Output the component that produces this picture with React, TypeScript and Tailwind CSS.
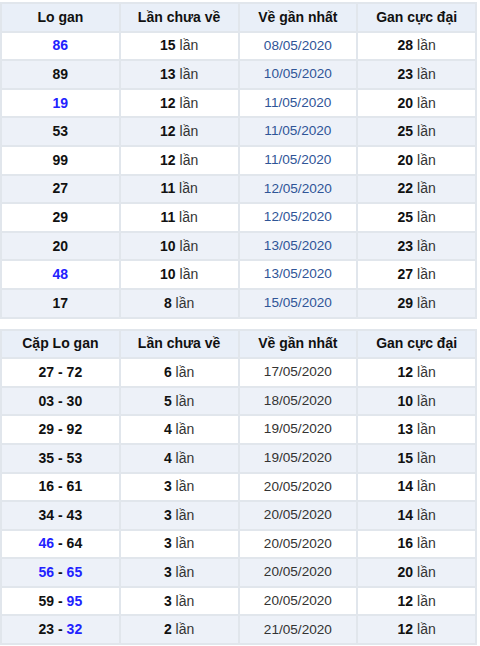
type Cell = { text: string; blue?: boolean };

const loGan = [
  { num: [{ text: "86", blue: true }], miss: "15", last: "08/05/2020", max: "28" },
  { num: [{ text: "89" }], miss: "13", last: "10/05/2020", max: "23" },
  { num: [{ text: "19", blue: true }], miss: "12", last: "11/05/2020", max: "20" },
  { num: [{ text: "53" }], miss: "12", last: "11/05/2020", max: "25" },
  { num: [{ text: "99" }], miss: "12", last: "11/05/2020", max: "20" },
  { num: [{ text: "27" }], miss: "11", last: "12/05/2020", max: "22" },
  { num: [{ text: "29" }], miss: "11", last: "12/05/2020", max: "25" },
  { num: [{ text: "20" }], miss: "10", last: "13/05/2020", max: "23" },
  { num: [{ text: "48", blue: true }], miss: "10", last: "13/05/2020", max: "27" },
  { num: [{ text: "17" }], miss: "8", last: "15/05/2020", max: "29" },
];

const pair = (a: string, ab: boolean, b: string, bb: boolean): Cell[] => [
  { text: a, blue: ab },
  { text: " - " },
  { text: b, blue: bb },
];

const capLoGan = [
  { num: pair("27", false, "72", false), miss: "6", last: "17/05/2020", max: "12" },
  { num: pair("03", false, "30", false), miss: "5", last: "18/05/2020", max: "10" },
  { num: pair("29", false, "92", false), miss: "4", last: "19/05/2020", max: "13" },
  { num: pair("35", false, "53", false), miss: "4", last: "19/05/2020", max: "15" },
  { num: pair("16", false, "61", false), miss: "3", last: "20/05/2020", max: "14" },
  { num: pair("34", false, "43", false), miss: "3", last: "20/05/2020", max: "14" },
  { num: pair("46", true, "64", false), miss: "3", last: "20/05/2020", max: "16" },
  { num: pair("56", true, "65", true), miss: "3", last: "20/05/2020", max: "20" },
  { num: pair("59", false, "95", true), miss: "3", last: "20/05/2020", max: "12" },
  { num: pair("23", false, "32", true), miss: "2", last: "21/05/2020", max: "12" },
];

type Row = { num: Cell[]; miss: string; last: string; max: string };

function GanTable({ first, rows, dateClass }: { first: string; rows: Row[]; dateClass: string }) {
  const head = [first, "Lần chưa về", "Về gần nhất", "Gan cực đại"];
  return (
    <div className="grid w-[477px] grid-cols-4 gap-[2px] bg-[#e1e6ec] p-[2px]">
      {head.map((h) => (
        <div key={h} className="flex h-[26.6px] items-center justify-center bg-[#e9eff8] font-bold text-[#111]">
          {h}
        </div>
      ))}
      {rows.map((r, i) => {
        const bg = i % 2 === 0 ? "bg-white" : "bg-[#edf1f8]";
        return [
          <div key={`a${i}`} className={`flex h-[26.6px] items-center justify-center font-bold whitespace-pre ${bg}`}>
            {r.num.map((c, j) => (
              <span key={j} className={c.blue ? "text-[#2222ff]" : "text-[#111]"}>
                {c.text}
              </span>
            ))}
          </div>,
          <div key={`b${i}`} className={`flex h-[26.6px] items-center justify-center whitespace-pre ${bg}`}>
            <span className="font-bold text-[#111]">{r.miss}</span>
            <span className="text-[#333]"> lần</span>
          </div>,
          <div key={`c${i}`} className={`flex h-[26.6px] items-center justify-center text-[13.6px] ${bg} ${dateClass}`}>
            {r.last}
          </div>,
          <div key={`d${i}`} className={`flex h-[26.6px] items-center justify-center whitespace-pre ${bg}`}>
            <span className="font-bold text-[#111]">{r.max}</span>
            <span className="text-[#333]"> lần</span>
          </div>,
        ];
      })}
    </div>
  );
}

export default function App() {
  return (
    <div className="h-[646px] w-[480px] overflow-hidden bg-white pt-[2px] font-['Liberation_Sans',Arial,sans-serif] text-[14px]">
      <GanTable first="Lo gan" rows={loGan} dateClass="text-[#2f5597]" />
      <div className="h-[10px]" />
      <GanTable first="Cặp Lo gan" rows={capLoGan} dateClass="text-[#333]" />
    </div>
  );
}
